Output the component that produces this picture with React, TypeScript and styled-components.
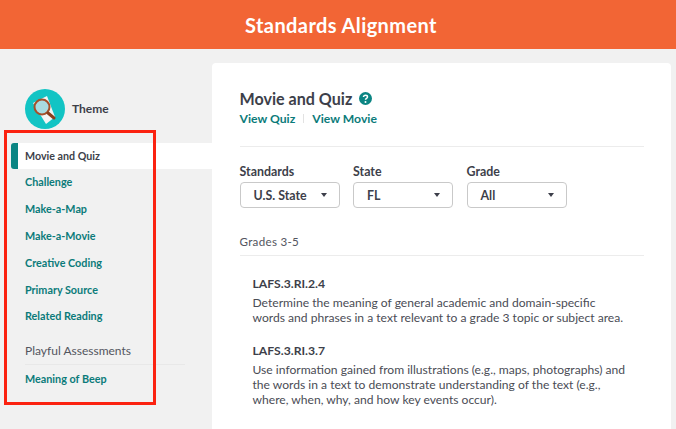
import styled, { createGlobalStyle } from "styled-components";

const GlobalStyle = createGlobalStyle`
  html, body {
    margin: 0;
    padding: 0;
    width: 676px;
    height: 429px;
    overflow: hidden;
    background: #f1f1f1;
    font-family: "Lato", "Liberation Sans", sans-serif;
  }
`;

const Page = styled.div`
  position: relative;
  width: 676px;
  height: 429px;
  overflow: hidden;
  background: #f1f1f1;
`;

const Header = styled.header`
  height: 49px;
  background: #f26535;
  color: #fff;
  display: flex;
  align-items: center;
  justify-content: center;
  padding-left: 6px;
  box-sizing: border-box;
  font-size: 20px;
  font-weight: 700;
  letter-spacing: 0.4px;
`;

const Body = styled.div`
  display: flex;
  align-items: flex-start;
  padding-top: 14px;
`;

const Sidebar = styled.aside`
  width: 212px;
  flex-shrink: 0;
  padding: 26px 0 0 11px;
  box-sizing: border-box;
`;

const ThemeRow = styled.div`
  display: flex;
  align-items: center;
  gap: 7px;
  padding-left: 14px;
  height: 40px;
  margin-bottom: 14px;
  font-size: 12px;
  font-weight: 700;
  color: #3d3f4a;
`;

const ThemeLabel = styled.span`
  padding-bottom: 1px;
`;

const ActiveItem = styled.div`
  height: 26px;
  display: flex;
  align-items: center;
  background: #fff;
  border-left: 7px solid #0b8583;
  border-radius: 3px 0 0 3px;
  box-sizing: border-box;
  padding: 0 0 2px 7px;
  font-size: 10.7px;
  font-weight: 700;
  color: #3d3f4a;
`;

const NavItem = styled.a`
  height: 26.8px;
  display: flex;
  align-items: center;
  margin-top: -0.5px;
  margin-bottom: 0.5px;
  padding-left: 14px;
  font-size: 10.8px;
  font-weight: 700;
  color: #0b7b7a;
`;

const SectionTitle = styled.div`
  margin: 8px 0 0 14px;
  width: 160px;
  height: 27px;
  display: flex;
  align-items: center;
  border-bottom: 1px solid #e8e8e8;
  font-size: 12px;
  color: #53555e;
`;

const Panel = styled.main`
  width: 459px;
  height: 380px;
  background: #fff;
  border-radius: 4px 4px 0 0;
  padding: 26px 27px 0 27.5px;
  box-sizing: border-box;
`;

const TitleRow = styled.div`
  display: flex;
  align-items: center;
  gap: 7px;
  font-size: 16.1px;
  font-weight: 700;
  color: #3d3f4a;
  height: 18px;
`;

const LinkRow = styled.div`
  display: flex;
  align-items: center;
  margin-top: 4px;
  padding-bottom: 20px;
  border-bottom: 1px solid #ececec;
  font-size: 12.2px;
  font-weight: 700;
  color: #0b7b7a;
`;

const LinkDivider = styled.span`
  width: 1px;
  height: 9px;
  margin: 0 8px;
  background: #e2e2e2;
`;

const Filters = styled.div`
  display: flex;
  gap: 13.5px;
  margin-top: 17px;
`;

const Filter = styled.div<{ $width: number }>`
  width: ${({ $width }) => $width}px;
`;

const FilterLabel = styled.div`
  font-size: 12.4px;
  font-weight: 700;
  color: #3d3f4a;
  margin-bottom: 3px;
`;

const Select = styled.div`
  height: 26px;
  border: 1px solid #c9c9c9;
  border-radius: 4px;
  box-sizing: border-box;
  display: flex;
  align-items: center;
  justify-content: space-between;
  padding: 0 12px 0 13px;
  font-size: 12.4px;
  font-weight: 700;
  color: #3d3f4a;
`;

const Caret = styled.span`
  width: 0;
  height: 0;
  border-left: 3.5px solid transparent;
  border-right: 3.5px solid transparent;
  border-top: 4px solid #3d3f4a;
`;

const GradeHeading = styled.div`
  margin-top: 27px;
  padding-bottom: 7px;
  border-bottom: 1px solid #ececec;
  font-size: 11.6px;
  letter-spacing: 0.3px;
  color: #53555e;
`;

const Standards = styled.div`
  padding: 20px 16px 0 13px;
`;

const Standard = styled.section`
  margin-bottom: 18px;
`;

const Code = styled.div`
  font-size: 12.2px;
  font-weight: 700;
  color: #3d3f4a;
  margin-bottom: 4px;
`;

const Description = styled.p`
  margin: 0;
  font-size: 12.1px;
  line-height: 15px;
  color: #4a4c55;
`;

const Highlight = styled.div`
  position: absolute;
  left: 4px;
  top: 130px;
  width: 152px;
  height: 275px;
  border: 3px solid #fb2210;
  box-sizing: border-box;
  pointer-events: none;
`;

function ThemeIcon() {
  return (
    <svg width="40" height="40" viewBox="0 0 40 40">
      <circle cx="20" cy="20" r="20" fill="#12c4c4" />
      <polygon points="8,14 22,7 30,28 21,35" fill="#f4f4f4" />
      <circle cx="17" cy="18" r="7.5" fill="#a9dbe0" stroke="#a5502a" strokeWidth="2" />
      <path d="M23 24l6 5" stroke="#8a3f1c" strokeWidth="3" strokeLinecap="round" />
    </svg>
  );
}

function HelpIcon() {
  return (
    <svg width="13" height="13" viewBox="0 0 13 13">
      <circle cx="6.5" cy="6.5" r="6.5" fill="#0b8583" />
      <path
        d="M4.5 5.1c0-1.2.9-1.9 2-1.9s2 .7 2 1.7c0 1.5-2 1.5-2 2.9"
        fill="none"
        stroke="#fff"
        strokeWidth="1.5"
      />
      <circle cx="6.5" cy="10" r="1" fill="#fff" />
    </svg>
  );
}

const navItems = [
  "Challenge",
  "Make-a-Map",
  "Make-a-Movie",
  "Creative Coding",
  "Primary Source",
  "Related Reading",
];

const filters = [
  { label: "Standards", value: "U.S. State", width: 100 },
  { label: "State", value: "FL", width: 100 },
  { label: "Grade", value: "All", width: 100 },
];

export default function App() {
  return (
    <Page>
      <GlobalStyle />
      <Header>Standards Alignment</Header>
      <Body>
        <Sidebar>
          <ThemeRow>
            <ThemeIcon />
            <ThemeLabel>Theme</ThemeLabel>
          </ThemeRow>
          <ActiveItem>Movie and Quiz</ActiveItem>
          {navItems.map((item) => (
            <NavItem key={item}>{item}</NavItem>
          ))}
          <SectionTitle>Playful Assessments</SectionTitle>
          <NavItem>Meaning of Beep</NavItem>
        </Sidebar>
        <Panel>
          <TitleRow>
            Movie and Quiz
            <HelpIcon />
          </TitleRow>
          <LinkRow>
            View Quiz
            <LinkDivider />
            View Movie
          </LinkRow>
          <Filters>
            {filters.map((filter) => (
              <Filter key={filter.label} $width={filter.width}>
                <FilterLabel>{filter.label}</FilterLabel>
                <Select>
                  {filter.value}
                  <Caret />
                </Select>
              </Filter>
            ))}
          </Filters>
          <GradeHeading>Grades 3-5</GradeHeading>
          <Standards>
            <Standard>
              <Code>LAFS.3.RI.2.4</Code>
              <Description>
                Determine the meaning of general academic and domain-specific
                words and phrases in a text relevant to a grade 3 topic or
                subject area.
              </Description>
            </Standard>
            <Standard>
              <Code>LAFS.3.RI.3.7</Code>
              <Description>
                Use information gained from illustrations (e.g., maps,
                photographs) and the words in a text to demonstrate
                understanding of the text (e.g., where, when, why, and how key
                events occur).
              </Description>
            </Standard>
          </Standards>
        </Panel>
      </Body>
      <Highlight />
    </Page>
  );
}
